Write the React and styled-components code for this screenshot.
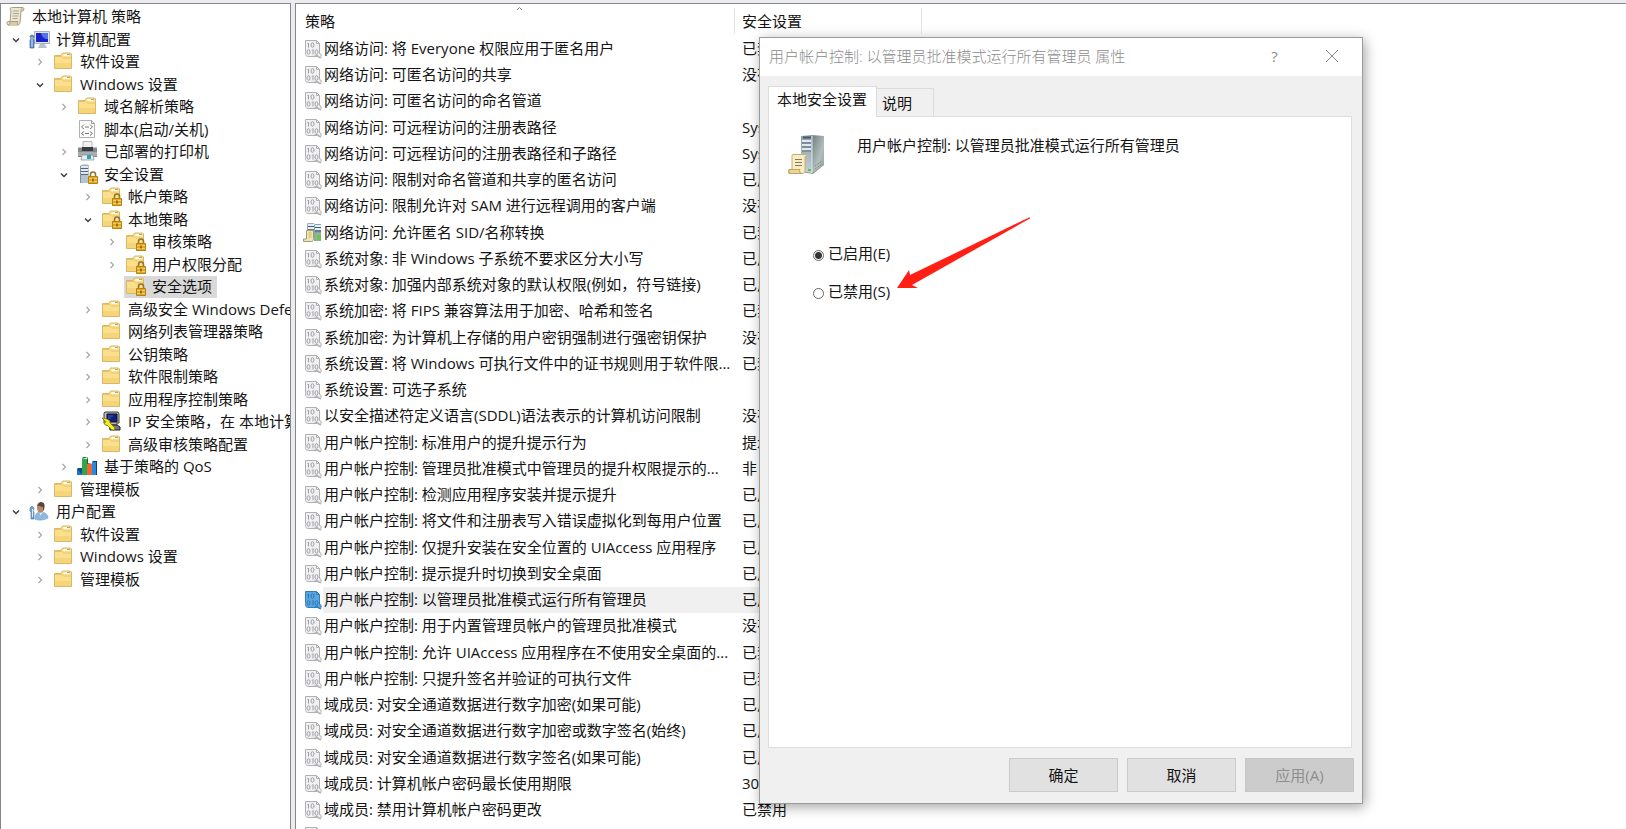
import React, { useState } from 'react';
import styled, { createGlobalStyle, css } from 'styled-components';

const GlobalStyle = createGlobalStyle`
  * {
    box-sizing: border-box;
  }
  body {
    margin: 0;
    overflow: hidden;
    background: #f0f0f0;
    color: #141414;
    font-family: 'Open Sans', 'Noto Sans CJK SC', sans-serif;
    font-size: 15px;
    line-height: 20px;
  }
  button, input {
    font: inherit;
    color: inherit;
  }
`;

const Console = styled.main`
  display: flex;
  gap: 4px;
  height: 100vh;
  padding-top: 3px;
  background: #ececee;
`;

const TreePane = styled.nav`
  flex: none;
  width: 291px;
  padding: 2px 0 0 3px;
  overflow: hidden;
  background: #fff;
  border: solid #828790;
  border-width: 1px 1px 0;
`;

const ListPane = styled.section`
  flex: 1;
  min-width: 0;
  padding-top: 2px;
  overflow: hidden;
  background: #fff;
  border: solid #828790;
  border-width: 1px 0 0 1px;
`;

/* tree */

const Tree = styled.ul`
  margin: 0;
  padding: 0;
  list-style: none;
`;

const TreeRow = styled.li`
  display: flex;
  align-items: stretch;
  height: 22px;
  padding-left: ${({ $level }) => Math.max($level - 1, 0) * 24}px;
  white-space: nowrap;

  &:nth-child(even) {
    height: 23px;
  }
`;

const Toggle = styled.button`
  display: flex;
  flex: none;
  align-items: center;
  justify-content: center;
  width: 24px;
  padding: 0;
  background: none;
  border: 0;
`;

const ToggleSpace = styled.span`
  flex: none;
  width: 24px;
`;

const TreeLabel = styled.span`
  display: flex;
  gap: 6px;
  align-items: center;
  padding: 0 5px 2px 0;
  background: ${({ $selected }) => ($selected ? '#d9d9d9' : 'transparent')};

  svg {
    flex: none;
    margin-left: 1px;
  }
`;

/* policy list */

const PolicyTable = styled.table`
  width: 626px;
  table-layout: fixed;
  border-collapse: collapse;
`;

const HeadCell = styled.th`
  position: relative;
  width: ${({ $wide }) => ($wide ? '439px' : '187px')};
  height: 30px;
  padding: 0 0 0 ${({ $wide }) => ($wide ? '9px' : '7px')};
  font-weight: 400;
  text-align: left;
  background: linear-gradient(#e5e5e5, #e5e5e5) right center / 1px 26px no-repeat;
`;

const SortMark = styled.svg`
  position: absolute;
  top: 0;
  left: 50%;
`;

const PolicyRow = styled.tr`
  height: 26px;

  &:nth-child(4n) {
    height: 27px;
  }
`;

const NameCell = styled.td`
  padding: 0;
`;

const Name = styled.div`
  display: flex;
  align-items: center;
  height: 26px;
  padding-left: 7px;
  white-space: nowrap;

  svg {
    flex: none;
  }
`;

const NameText = styled.span`
  flex: 1;
  height: 26px;
  padding-left: 1px;
  line-height: 24px;
  background: ${({ $selected }) => ($selected ? '#f0f0f0' : 'transparent')};
`;

const ValueCell = styled.td`
  padding: 0 0 2px 7px;
  overflow: hidden;
  white-space: nowrap;
  background: ${({ $selected }) => ($selected ? '#f0f0f0' : 'transparent')};
`;

/* property dialog */

const Dialog = styled.section`
  position: absolute;
  top: 37px;
  left: 759px;
  display: flex;
  flex-direction: column;
  width: 604px;
  background: #f0f0f0;
  border: 1px solid #9b9b9b;
  box-shadow: 2px 3px 12px rgba(0, 0, 0, 0.36);
`;

const TitleBar = styled.header`
  display: flex;
  align-items: center;
  height: 38px;
  padding: 0 0 2px 9px;
  background: #fff;
  color: #8c8c8c;
`;

const Title = styled.h1`
  flex: 1;
  margin: 0;
  font-size: 15px;
  font-weight: 300;
`;

const TitleButton = styled.button`
  display: flex;
  align-items: center;
  justify-content: center;
  width: 57px;
  height: 36px;
  padding: 0;
  background: none;
  border: 0;

  &:last-child {
    margin-right: 2px;
  }
`;

const DialogBody = styled.div`
  padding: 10px 10px 10px 8px;
`;

const Tabs = styled.div`
  display: flex;
  align-items: flex-end;
`;

const Tab = styled.button`
  height: 28px;
  padding: 0 21px 0 5px;
  background: #f0f0f0;
  border: 1px solid #dcdcdc;
  border-width: 1px 1px 0 0;

  ${({ $active }) =>
    $active &&
    css`
      position: relative;
      height: 31px;
      margin-bottom: -1px;
      padding: 0 9px 6px 8px;
      background: #fff;
      border-left-width: 1px;
    `}
`;

const Panel = styled.div`
  min-height: 632px;
  padding: 18px 19px;
  background: #fff;
  border: 1px solid #dcdcdc;
`;

const PolicyTitle = styled.div`
  display: flex;
  gap: 31px;
  height: 40px;
`;

const Options = styled.fieldset`
  display: flex;
  flex-direction: column;
  gap: 18px;
  margin: 68px 0 0;
  padding: 0 0 0 25px;
  border: 0;
`;

const Option = styled.label`
  display: flex;
  gap: 4px;
  align-items: center;
`;

const Radio = styled.input`
  appearance: none;
  width: 11px;
  height: 11px;
  margin: 4px 0 0;
  background: #fff;
  border: 1px solid #666;
  border-radius: 50%;

  &:checked {
    background: radial-gradient(#333 3px, #fff 4px);
  }
`;

const Footer = styled.footer`
  display: flex;
  gap: 9px;
  justify-content: flex-end;
  padding: 0 8px 11px;
`;

const PushButton = styled.button`
  width: 109px;
  height: 34px;
  padding: 0;
  background: #e1e1e1;
  border: 1px solid #cacaca;

  &:disabled {
    background: #ccc;
    border-color: #c6c6c6;
    color: #8e8e8e;
  }
`;

const Arrow = styled.svg`
  position: absolute;
  top: 177px;
  left: 135px;
  pointer-events: none;
`;

/* icons */

const FolderShape = () => (
  <>
    <path d="M1.500 4.500h6.500l1.500-2.500h8l1 1v14.500h-17z" fill="#fbdf8b" stroke="#d9b968" />
    <path d="M2 12h16v5H2z" fill="#f6d479" />
    <path d="M10.500 4h6" stroke="#fffbe6" strokeWidth="2" />
    <path d="M14 3.500h3" stroke="#a3aa8c" />
    <path d="M2 5.500h7l1.500 1.500h7.500" fill="none" stroke="#e5c470" />
  </>
);

const LockShape = () => (
  <>
    <path d="M13.500 13v-2.500a2.500 2.500 0 0 1 5 0V13" fill="none" stroke="#94752b" strokeWidth="1.600" />
    <path d="M11.500 12.500h9v7h-9z" fill="#e3a922" stroke="#b3811a" />
    <path d="M12 14.500h8M12 17.500h8" stroke="#f6cf61" />
    <path d="M16 14.500v3" stroke="#7b5509" strokeWidth="1.400" />
  </>
);

const icons = {
  folder: <FolderShape />,
  locked: (
    <>
      <FolderShape />
      <LockShape />
    </>
  ),
  scroll: (
    <>
      <path d="M5 2.500c1-1 2-1 3-1h10c-2 1-2 2-2 4l-1 11c-.3 2-1 2.500-3 2.500H3c-1.500-1-1.500-3 0-3.500h2L6 5z" fill="#eee7cf" stroke="#a99d7d" />
      <path d="M18 1.500c1.500 1 1 3.500-.5 3.500H16M3 19c2 0 2-2 1.500-3.500H13c-1 2 0 3-1 3.500" fill="#d8cda9" stroke="#a99d7d" />
      <path d="M8 5h6M8 7.500h6M7.500 10h6M7.500 12.500h5" stroke="#a9a595" />
    </>
  ),
  computer: (
    <>
      <path d="M5.500 2.500h15v12h-15z" fill="#dfe5ef" stroke="#a8b1c2" />
      <path d="M7 4h12v9H7z" fill="#1a22c8" />
      <path d="M12 4h7v6c-4 0-6-2-7-6z" fill="#4f74ee" />
      <path d="M11 15h5l2 4H9z" fill="#b9c1c9" />
      <path d="M1 7l2-1 2 1-1 3 1 1v8H1v-8l1-1z" fill="#5e8fc6" stroke="#3d659b" strokeWidth=".7" />
      <path d="M3 8v10" stroke="#c7e3f8" />
    </>
  ),
  script: (
    <>
      <path d="M2.500 1.500h12l3 3v14h-15z" fill="#fcfcfc" stroke="#b0b0b0" />
      <path d="M14.500 1.500v3h3" fill="none" stroke="#9b9b9b" />
      <path d="M7 5.500L4.500 8 7 10M13 5.500L15.500 8 13 10M8 8h4M7 12.500l-2.500 2L7 16.500M13 12.500l2.500 2-2.500 2M8 14.500h4" fill="none" stroke="#777" />
    </>
  ),
  printer: (
    <>
      <path d="M6 .5h9v8H6z" fill="#f1f1f3" stroke="#b7b7bb" />
      <path d="M1 6.500h4V8h11V6.500h4V16H1z" fill="#83888d" />
      <path d="M5 6h11v4H5z" fill="#3a3c40" />
      <path d="M1 11h19v4H1z" fill="#a9adb1" />
      <path d="M5 14h11l1 5H4z" fill="#e4edf1" stroke="#858a8f" strokeWidth=".7" />
      <path d="M10 14h4v4h-4z" fill="#27a6b4" />
      <path d="M2 12.500h2" stroke="#62d55d" />
    </>
  ),
  server: (
    <>
      <path d="M3 2L5 .5h6l1 1V19H3z" fill="#9fb2c4" />
      <path d="M3 2h9v17H3z" fill="#b4c3d0" />
      <path d="M4 3h7M4 6h7M4 9h7" stroke="#eef4f8" strokeWidth="1.600" />
      <path d="M4 4.500h7M4 7.500h7M4 10.500h7" stroke="#4f6779" />
      <path d="M3.500 2v17" stroke="#7c90a2" />
      <LockShape />
    </>
  ),
  ipsec: (
    <>
      <path d="M4 1h13l1 2v9h-2v2H5L3 12V2z" fill="#b9b9b9" stroke="#414141" />
      <path d="M6 3h10v8H6z" fill="#10207f" stroke="#111" />
      <path d="M7 5h5M7 7h3" stroke="#3b5fd0" />
      <path d="M8 14h8l3 2v3H9z" fill="#777" stroke="#222" />
      <path d="M1 7l5 1 3 2v2l5 5-1 2h-2l-5-5H4l-1-2 2-1z" fill="#f6ec1c" stroke="#77720a" strokeWidth=".7" />
    </>
  ),
  qos: (
    <>
      <path d="M0 13h6v6H0z" fill="#1c76c5" />
      <path d="M0 13l1-1h6l-1 1v6" fill="#114a82" />
      <path d="M5 3h5v16H5z" fill="#2fa84a" />
      <path d="M5 3l1-2h5l-1 2v16h1V1" fill="#146b2a" />
      <path d="M10 8h5v11h-5z" fill="#f0643a" />
      <path d="M10 8l1-1h5l-1 1v11h1V7" fill="#9f3216" />
      <path d="M15 6h4v13h-4z" fill="#2989db" />
      <path d="M15 6l1-1h4v14h-1V6" fill="#0c3d72" />
    </>
  ),
  user: (
    <>
      <path d="M6 18c0-6 3-7 6-7s7 2 7 6c-3 2-10 3-13 1z" fill="#8db8e2" stroke="#7ba5cf" strokeWidth=".7" />
      <path d="M10 11l1.500 3.500L14 11z" fill="#e4eef8" />
      <ellipse cx="11.500" cy="7" rx="3.500" ry="4.800" fill="#b98869" />
      <path d="M8 5c1-5 7-5 7.500-1 .3 3-.5 5-1.500 6V6c-2 0-4-2-6-1z" fill="#5b4638" />
      <path d="M1 7l2-2 2 2-1 3 1 1v7H2v-7L1 10z" fill="#6fa1d3" stroke="#557fad" strokeWidth=".7" />
      <path d="M3.500 8v8" stroke="#e0effb" />
    </>
  ),
};

const Icon = ({ name }) => (
  <svg width="21" height="20" viewBox="0 0 21 20" fill="none" aria-hidden="true">
    {icons[name]}
  </svg>
);

const PolicyIcon = ({ selected }) => {
  const line = selected ? '#2f7fc0' : '#b0b0b4';
  return (
    <svg width="20" height="20" viewBox="0 0 20 20" fill="none" aria-hidden="true">
      <path d="M2.500 1.500h11l3 3v10c2 0 2 2 1 4.500l-3-1.500H6c-2 0-3-.5-3.500-2-.3-1 .4-1.500 0-3z" fill={selected ? '#5aa7e0' : '#f1f1f2'} stroke={line} />
      <path d="M13.500 1.500v3h3" stroke={line} />
      <g stroke={selected ? '#2c76b5' : '#9e9ea8'}>
        <path d="M4.500 5l1-1v4.500" />
        <ellipse cx="9.500" cy="6" rx="1.500" ry="2.300" />
        <ellipse cx="5.500" cy="13" rx="1.500" ry="2.300" />
        <path d="M9 11.500l1-1v5" />
        <ellipse cx="13.500" cy="13" rx="1.500" ry="2.300" />
      </g>
      <path d="M11 17.500l3-1 3.500 2.500" stroke={line} strokeWidth="1.400" />
    </svg>
  );
};

const ServerGroupIcon = () => (
  <svg width="20" height="20" viewBox="0 0 20 20" fill="none" aria-hidden="true">
    <path d="M4 1l1-1h6v15H4z" fill="#9aabba" />
    <path d="M11 2l1-1h6v17h-7z" fill="#8ba0ae" />
    <path d="M5 2h6M5 5h6M12 3h6M12 6h6" stroke="#e6eff5" strokeWidth="2" />
    <path d="M5 3.500h6M5 7h6M12 4.500h6M12 8h6" stroke="#3d5c78" />
    <path d="M12 10h6v8h-6z" fill="#87b98c" />
    <path d="M14 12h4v5h-4z" fill="#69c55b" />
    <path d="M3.500 7.500h7v8c0 2-1 3-2 3h-8v-2.500h3z" fill="#efe5b9" stroke="#a39a73" />
    <path d="M5.500 10h3M5.500 12h3M5.500 14h3" stroke="#d7b34a" />
  </svg>
);

const ServerScroll = () => (
  <svg width="38" height="40" viewBox="0 0 38 40" fill="none" aria-hidden="true">
    <defs>
      <linearGradient id="front" x1="0" y1="0" x2="0" y2="1">
        <stop offset="0" stopColor="#8e9dab" />
        <stop offset="1" stopColor="#c3d0d8" />
      </linearGradient>
      <linearGradient id="side" x1="0" y1="0" x2="1" y2="1">
        <stop offset="0" stopColor="#6e7f82" />
        <stop offset=".6" stopColor="#b2bebc" />
        <stop offset="1" stopColor="#8e9c96" />
      </linearGradient>
    </defs>
    <path d="M13 1l12-1 11 1v29L25 39 13 37z" fill="#8a989e" />
    <path d="M13 1h11v37l-11-2z" fill="url(#front)" />
    <path d="M24 1h12v29l-12 8z" fill="url(#side)" />
    <path d="M15 2.500h8" stroke="#475966" strokeWidth="2" />
    <path d="M14 6h9M14 10h9M14 14h9" stroke="#dfe8ee" strokeWidth="2" />
    <path d="M14 8h9M14 12h9M14 16h9" stroke="#60717e" />
    <path d="M24 1v37" stroke="#dfe8e8" />
    <path d="M27 31l7-5M27 34l7-5" stroke="#78877f" strokeDasharray="1 1" />
    <path d="M20 35h3" stroke="#55c43d" strokeWidth="2" />
    <path d="M5 19.500h13c1 0 1 2-1 2v14c0 2-1 3-3 3H1c-1-1-1-4 1-4h2v-13c0-1 0-2 1-2z" fill="#f8edc7" stroke="#c9ac6d" />
    <path d="M1 34.500h11c-1 2 0 4 2 4H1z" fill="#ead59a" stroke="#c4a15b" />
    <path d="M7 24.500h7M7 27.500h7M7 30.500h7" stroke="#887a58" />
  </svg>
);

const Chevron = ({ open }) => (
  <svg width="8" height="8" viewBox="0 0 8 8" fill="none" aria-hidden="true">
    {open ? (
      <path d="M1 2.500l3 3 3-3" stroke="#404040" strokeWidth="1.500" />
    ) : (
      <path d="M2.500 1l3 3-3 3" stroke="#a6a6a6" strokeWidth="1.200" />
    )}
  </svg>
);

/* data: level, icon, label, toggle */

const treeItems = [
  [0, 'scroll', '本地计算机 策略', null],
  [1, 'computer', '计算机配置', 'open'],
  [2, 'folder', '软件设置', 'closed'],
  [2, 'folder', 'Windows 设置', 'open'],
  [3, 'folder', '域名解析策略', 'closed'],
  [3, 'script', '脚本(启动/关机)', null],
  [3, 'printer', '已部署的打印机', 'closed'],
  [3, 'server', '安全设置', 'open'],
  [4, 'locked', '帐户策略', 'closed'],
  [4, 'locked', '本地策略', 'open'],
  [5, 'locked', '审核策略', 'closed'],
  [5, 'locked', '用户权限分配', 'closed'],
  [5, 'locked', '安全选项', null],
  [4, 'folder', '高级安全 Windows Defender', 'closed'],
  [4, 'folder', '网络列表管理器策略', null],
  [4, 'folder', '公钥策略', 'closed'],
  [4, 'folder', '软件限制策略', 'closed'],
  [4, 'folder', '应用程序控制策略', 'closed'],
  [4, 'ipsec', 'IP 安全策略，在 本地计算机', 'closed'],
  [4, 'folder', '高级审核策略配置', 'closed'],
  [3, 'qos', '基于策略的 QoS', 'closed'],
  [2, 'folder', '管理模板', 'closed'],
  [1, 'user', '用户配置', 'open'],
  [2, 'folder', '软件设置', 'closed'],
  [2, 'folder', 'Windows 设置', 'closed'],
  [2, 'folder', '管理模板', 'closed'],
];

const ON = '已启用';
const OFF = '已禁用';
const NONE = '没有定义';

const policies = [
  ['网络访问: 将 Everyone 权限应用于匿名用户', OFF],
  ['网络访问: 可匿名访问的共享', NONE],
  ['网络访问: 可匿名访问的命名管道', ''],
  ['网络访问: 可远程访问的注册表路径', 'System'],
  ['网络访问: 可远程访问的注册表路径和子路径', 'System'],
  ['网络访问: 限制对命名管道和共享的匿名访问', ON],
  ['网络访问: 限制允许对 SAM 进行远程调用的客户端', NONE],
  ['网络访问: 允许匿名 SID/名称转换', OFF],
  ['系统对象: 非 Windows 子系统不要求区分大小写', ON],
  ['系统对象: 加强内部系统对象的默认权限(例如，符号链接)', ON],
  ['系统加密: 将 FIPS 兼容算法用于加密、哈希和签名', OFF],
  ['系统加密: 为计算机上存储的用户密钥强制进行强密钥保护', NONE],
  ['系统设置: 将 Windows 可执行文件中的证书规则用于软件限...', OFF],
  ['系统设置: 可选子系统', ''],
  ['以安全描述符定义语言(SDDL)语法表示的计算机访问限制', NONE],
  ['用户帐户控制: 标准用户的提升提示行为', '提示凭据'],
  ['用户帐户控制: 管理员批准模式中管理员的提升权限提示的...', '非 Windows'],
  ['用户帐户控制: 检测应用程序安装并提示提升', ON],
  ['用户帐户控制: 将文件和注册表写入错误虚拟化到每用户位置', ON],
  ['用户帐户控制: 仅提升安装在安全位置的 UIAccess 应用程序', ON],
  ['用户帐户控制: 提示提升时切换到安全桌面', ON],
  ['用户帐户控制: 以管理员批准模式运行所有管理员', ON],
  ['用户帐户控制: 用于内置管理员帐户的管理员批准模式', NONE],
  ['用户帐户控制: 允许 UIAccess 应用程序在不使用安全桌面的...', OFF],
  ['用户帐户控制: 只提升签名并验证的可执行文件', OFF],
  ['域成员: 对安全通道数据进行数字加密(如果可能)', ON],
  ['域成员: 对安全通道数据进行数字加密或数字签名(始终)', ON],
  ['域成员: 对安全通道数据进行数字签名(如果可能)', ON],
  ['域成员: 计算机帐户密码最长使用期限', '30 天'],
  ['域成员: 禁用计算机帐户密码更改', OFF],
  ['', ''],
];

const SELECTED_POLICY = 21;

const PolicyTree = () => (
  <TreePane aria-label="本地计算机 策略">
    <Tree>
      {treeItems.map(([level, icon, label, state], i) => (
        <TreeRow key={i} $level={level}>
          {state && (
            <Toggle type="button" aria-label={label} aria-expanded={state === 'open'}>
              <Chevron open={state === 'open'} />
            </Toggle>
          )}
          {!state && level > 0 && <ToggleSpace />}
          <TreeLabel $selected={label === '安全选项'}>
            <Icon name={icon} />
            {label}
          </TreeLabel>
        </TreeRow>
      ))}
    </Tree>
  </TreePane>
);

const PolicyList = () => (
  <ListPane>
    <PolicyTable>
      <thead>
        <tr>
          <HeadCell $wide>
            策略
            <SortMark width="7" height="5" viewBox="0 0 7 5" fill="none">
              <path d="M1 4l2.500-2.500L6 4" stroke="#8a8a8a" />
            </SortMark>
          </HeadCell>
          <HeadCell>安全设置</HeadCell>
        </tr>
      </thead>
      <tbody>
        {policies.map(([name, value], i) => {
          const selected = i === SELECTED_POLICY;
          return (
            <PolicyRow key={i}>
              <NameCell>
                <Name>
                  {i === 7 ? <ServerGroupIcon /> : <PolicyIcon selected={selected} />}
                  <NameText $selected={selected}>{name}</NameText>
                </Name>
              </NameCell>
              <ValueCell $selected={selected}>{value}</ValueCell>
            </PolicyRow>
          );
        })}
      </tbody>
    </PolicyTable>
  </ListPane>
);

const PropertyDialog = () => {
  const [setting, setSetting] = useState('on');

  return (
    <Dialog role="dialog" aria-labelledby="dialog-title">
      <TitleBar>
        <Title id="dialog-title">用户帐户控制: 以管理员批准模式运行所有管理员 属性</Title>
        <TitleButton type="button">?</TitleButton>
        <TitleButton type="button" aria-label="关闭">
          <svg width="14" height="14" viewBox="0 0 14 14" fill="none">
            <path d="M1 1l12 12M13 1L1 13" stroke="#858585" />
          </svg>
        </TitleButton>
      </TitleBar>
      <DialogBody>
        <Tabs role="tablist">
          <Tab type="button" role="tab" aria-selected="true" $active>本地安全设置</Tab>
          <Tab type="button" role="tab" aria-selected="false">说明</Tab>
        </Tabs>
        <Panel role="tabpanel">
          <PolicyTitle>
            <ServerScroll />
            <span>用户帐户控制: 以管理员批准模式运行所有管理员</span>
          </PolicyTitle>
          <Options>
            <Option>
              <Radio type="radio" name="setting" checked={setting === 'on'} onChange={() => setSetting('on')} />
              已启用(E)
            </Option>
            <Option>
              <Radio type="radio" name="setting" checked={setting === 'off'} onChange={() => setSetting('off')} />
              已禁用(S)
            </Option>
          </Options>
        </Panel>
      </DialogBody>
      <Footer>
        <PushButton type="button">确定</PushButton>
        <PushButton type="button">取消</PushButton>
        <PushButton type="button" disabled>应用(A)</PushButton>
      </Footer>
      <Arrow width="137" height="76" viewBox="0 0 137 76" aria-hidden="true">
        <path d="M2 73L14 55l1 5L133 3c2-1 3 0 1 1L17 70l6 3z" fill="#ff1f14" />
      </Arrow>
    </Dialog>
  );
};

const App = () => (
  <>
    <GlobalStyle />
    <Console>
      <PolicyTree />
      <PolicyList />
    </Console>
    <PropertyDialog />
  </>
);

export default App;
